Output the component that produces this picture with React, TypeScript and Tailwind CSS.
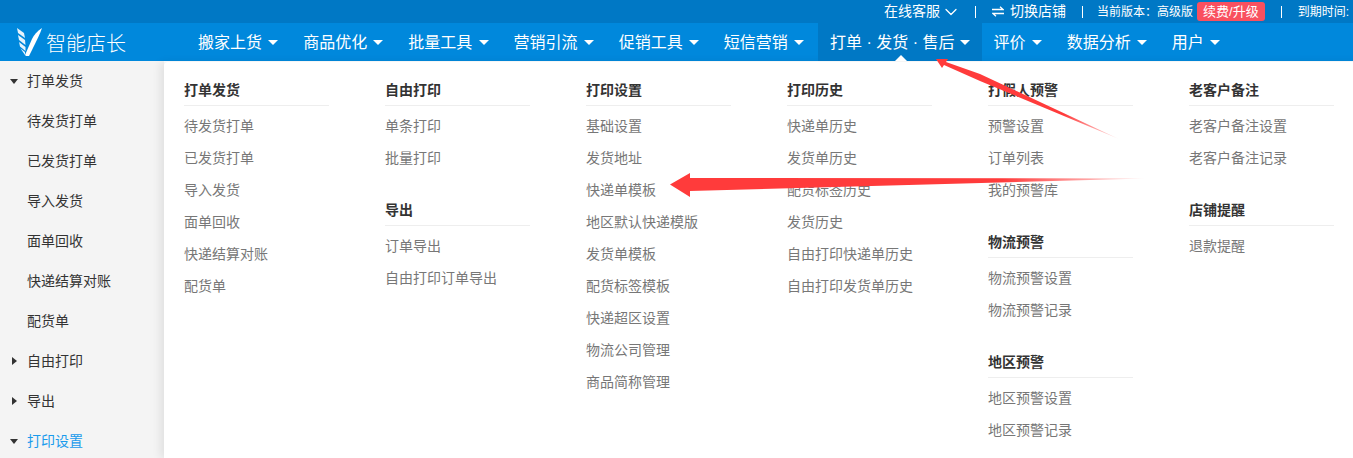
import { ChevronDown } from "lucide-react"

interface MenuGroup {
  title: string
  items: string[]
}

const navItems = ["搬家上货", "商品优化", "批量工具", "营销引流", "促销工具", "短信营销", "打单 · 发货 · 售后", "评价", "数据分析", "用户"]

const sideItems = [
  { label: "打单发货", open: true },
  { label: "待发货打单", child: true },
  { label: "已发货打单", child: true },
  { label: "导入发货", child: true },
  { label: "面单回收", child: true },
  { label: "快递结算对账", child: true },
  { label: "配货单", child: true },
  { label: "自由打印" },
  { label: "导出" },
  { label: "打印设置", open: true, active: true },
]

const columns: MenuGroup[][] = [
  [{ title: "打单发货", items: ["待发货打单", "已发货打单", "导入发货", "面单回收", "快递结算对账", "配货单"] }],
  [
    { title: "自由打印", items: ["单条打印", "批量打印"] },
    { title: "导出", items: ["订单导出", "自由打印订单导出"] },
  ],
  [{ title: "打印设置", items: ["基础设置", "发货地址", "快递单模板", "地区默认快递模版", "发货单模板", "配货标签模板", "快递超区设置", "物流公司管理", "商品简称管理"] }],
  [{ title: "打印历史", items: ["快递单历史", "发货单历史", "配货标签历史", "发货历史", "自由打印快递单历史", "自由打印发货单历史"] }],
  [
    { title: "打假人预警", items: ["预警设置", "订单列表", "我的预警库"] },
    { title: "物流预警", items: ["物流预警设置", "物流预警记录"] },
    { title: "地区预警", items: ["地区预警设置", "地区预警记录"] },
  ],
  [
    { title: "老客户备注", items: ["老客户备注设置", "老客户备注记录"] },
    { title: "店铺提醒", items: ["退款提醒"] },
  ],
]

function Logo() {
  return (
    <svg width="25" height="28" viewBox="0 0 25 28" fill="#fff" className="shrink-0">
      <path d="M8 27 L15 11 C17 7 20 3 25 0 C23 6 19 14 12 28 L9 28 Z" />
      <path d="M0 0 L7 5 L8 10 L1 5 Z" opacity="0.9" />
      <path d="M1 7 L8 12 L8.5 17 L2 12 Z" opacity="0.9" />
      <path d="M2 14 L8.5 19 L8.5 23 L3 18.5 Z" opacity="0.9" />
      <path d="M3.5 20.5 L8 24 L8 27 Z" opacity="0.9" />
    </svg>
  )
}

function SwapIcon() {
  return (
    <svg width="12" height="11" viewBox="0 0 12 11" fill="none" stroke="#fff" strokeWidth="1.3" className="shrink-0">
      <path d="M0 3.5H11L8 0.8" />
      <path d="M12 7.5H1L4 10.2" />
    </svg>
  )
}

export default function App() {
  return (
    <div className="relative h-[458px] w-[1353px] overflow-hidden bg-white font-['Liberation_Sans','Noto_Sans_CJK_SC',sans-serif]">
      {/* top strip */}
      <div className="flex h-[23px] items-center whitespace-nowrap bg-[#0078c5] pl-[884px] text-[14px] text-white">
        <span className="shrink-0">在线客服</span>
        <ChevronDown className="ml-[1px] h-[20px] w-[20px] shrink-0" strokeWidth={1.5} />
        <span className="ml-[14px] h-[12px] w-px shrink-0 bg-white" />
        <span className="ml-[16px] shrink-0"><SwapIcon /></span>
        <span className="ml-[6px] shrink-0">切换店铺</span>
        <span className="ml-[16px] h-[12px] w-px shrink-0 bg-white" />
        <span className="ml-[14px] shrink-0 text-[12px]">当前版本：</span>
        <span className="shrink-0 text-[12px]">高级版</span>
        <span className="ml-[4px] shrink-0 rounded-[3px] bg-[#f9505f] px-[6px] text-[13px] leading-[19px]">续费/升级</span>
        <span className="ml-[16px] h-[12px] w-px shrink-0 bg-white" />
        <span className="ml-[16px] shrink-0 text-[12px]">到期时间:</span>
      </div>

      {/* main nav */}
      <div className="flex h-[38px] items-stretch bg-[#0088dc] text-white">
        <div className="flex w-[187px] items-center gap-[4px] pl-[17px]">
          <Logo />
          <span className="pt-[3px] text-[20px] font-light leading-none">智能店长</span>
        </div>
        {navItems.map((item, i) => (
          <div
            key={item}
            className={i === 6 ? "relative flex items-center gap-[6px] bg-[#0078c5] pl-[12px] pr-[12px] text-[16px]" : "flex items-center gap-[6.17px] pl-[11px] pr-[14px] text-[16px]"}
          >
            <span className="pt-[2px]">{item}</span>
            <span className="inline-block border-x-[5px] border-t-[5px] border-x-transparent border-t-white" />
            {i === 6 && (
              <span className="absolute bottom-0 left-[77px] border-x-[6px] border-b-[6px] border-x-transparent border-b-white" />
            )}
          </div>
        ))}
      </div>

      <div className="flex">
        {/* sidebar */}
        <div className="h-[397px] w-[164px] shrink-0 bg-[#f4f4f4] text-[14px] text-[#333]">
          {sideItems.map((item) => (
            <div key={item.label} className={`flex h-[40px] items-center pl-[10px] ${item.active ? "text-[#1a9bec]" : ""}`}>
              <span className="flex w-[17px] items-center">
                {item.open && <span className="inline-block border-x-[4px] border-t-[5px] border-x-transparent border-t-[#333]" />}
                {!item.open && !item.child && (
                  <span className="ml-[2px] inline-block border-y-[4px] border-l-[5px] border-y-transparent border-l-[#333]" />
                )}
              </span>
              <span>{item.label}</span>
            </div>
          ))}
        </div>

        {/* dropdown panel */}
        <div className="mt-[1px] flex h-[396px] flex-1 rounded-tl-[4px] bg-white shadow-[-4px_0_8px_rgba(0,0,0,0.08)]">
          {columns.map((groups) => (
            <div key={groups[0].title} className="w-[201px] pl-[20px] pt-[16px]">
              {groups.map((group) => (
                <div key={group.title} className="mb-[24px] w-[145px]">
                  <div className="h-[28px] border-b border-[#eeeeee] text-[14px] font-bold leading-[24px] text-[#333]">{group.title}</div>
                  <div className="pt-[4px]">
                    {group.items.map((link) => (
                      <div key={link} className="h-[32px] whitespace-nowrap text-[14px] leading-[32px] text-[#777]">
                        {link}
                      </div>
                    ))}
                  </div>
                </div>
              ))}
            </div>
          ))}
        </div>
      </div>

      {/* annotation arrows pasted over the screenshot */}
      <svg className="pointer-events-none absolute inset-0" width="1353" height="458" viewBox="0 0 1353 458">
        <defs>
          <linearGradient id="fadeA" gradientUnits="userSpaceOnUse" x1="936" y1="58" x2="1119" y2="139">
            <stop offset="0.7" stopColor="#ff3b3b" />
            <stop offset="1" stopColor="#ff3b3b" stopOpacity="0.1" />
          </linearGradient>
          <linearGradient id="fadeB" gradientUnits="userSpaceOnUse" x1="670" y1="184" x2="1145" y2="178">
            <stop offset="0.7" stopColor="#ff3b3b" />
            <stop offset="1" stopColor="#ff3b3b" stopOpacity="0.1" />
          </linearGradient>
        </defs>
        <polygon points="936,59 948,59 946,62 980,74 1119,139 980,81 944,65 942,68" fill="url(#fadeA)" />
        <polygon points="670,184.5 690,173 690,178 1145,178.5 690,191 690,197" fill="url(#fadeB)" />
      </svg>
    </div>
  )
}
